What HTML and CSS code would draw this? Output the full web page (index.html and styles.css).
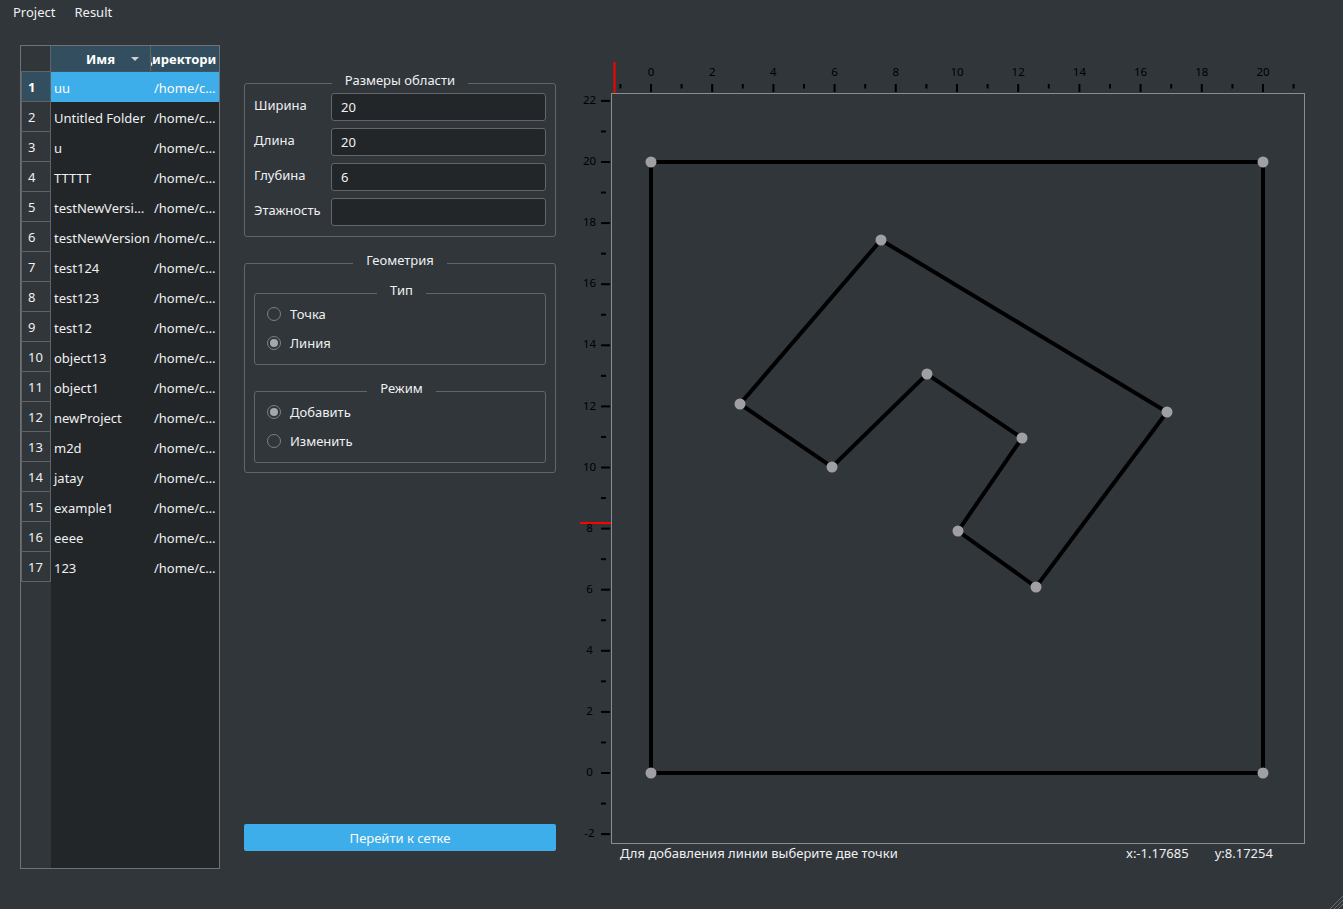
FILE: index.html
```html
<!DOCTYPE html>
<html lang="ru">
<head>
<meta charset="utf-8">
<title>Project</title>
<link rel="stylesheet" href="styles.css">
</head>
<body>
<div class="menubar">
  <span class="menu-item">Project</span>
  <span class="menu-item">Result</span>
</div>
<div class="main">
  <div class="table">
    <div class="vheader">
      <div class="corner"></div>
      <div class="vcell sel">1</div>
      <div class="vcell">2</div>
      <div class="vcell">3</div>
      <div class="vcell">4</div>
      <div class="vcell">5</div>
      <div class="vcell">6</div>
      <div class="vcell">7</div>
      <div class="vcell">8</div>
      <div class="vcell">9</div>
      <div class="vcell">10</div>
      <div class="vcell">11</div>
      <div class="vcell">12</div>
      <div class="vcell">13</div>
      <div class="vcell">14</div>
      <div class="vcell">15</div>
      <div class="vcell">16</div>
      <div class="vcell">17</div>
    </div>
    <div class="tbody">
      <div class="hrow">
        <div class="hcell c1"><span>Имя</span><span class="sort"></span></div>
        <div class="hcell c2"><span class="clip">Директория</span></div>
      </div>
      <div class="row sel"><div class="cell c1">uu</div><div class="cell c2">/home/c…</div></div>
      <div class="row"><div class="cell c1">Untitled Folder</div><div class="cell c2">/home/c…</div></div>
      <div class="row"><div class="cell c1">u</div><div class="cell c2">/home/c…</div></div>
      <div class="row"><div class="cell c1">TTTTT</div><div class="cell c2">/home/c…</div></div>
      <div class="row"><div class="cell c1">testNewVersi…</div><div class="cell c2">/home/c…</div></div>
      <div class="row"><div class="cell c1">testNewVersion</div><div class="cell c2">/home/c…</div></div>
      <div class="row"><div class="cell c1">test124</div><div class="cell c2">/home/c…</div></div>
      <div class="row"><div class="cell c1">test123</div><div class="cell c2">/home/c…</div></div>
      <div class="row"><div class="cell c1">test12</div><div class="cell c2">/home/c…</div></div>
      <div class="row"><div class="cell c1">object13</div><div class="cell c2">/home/c…</div></div>
      <div class="row"><div class="cell c1">object1</div><div class="cell c2">/home/c…</div></div>
      <div class="row"><div class="cell c1">newProject</div><div class="cell c2">/home/c…</div></div>
      <div class="row"><div class="cell c1">m2d</div><div class="cell c2">/home/c…</div></div>
      <div class="row"><div class="cell c1">jatay</div><div class="cell c2">/home/c…</div></div>
      <div class="row"><div class="cell c1">example1</div><div class="cell c2">/home/c…</div></div>
      <div class="row"><div class="cell c1">eeee</div><div class="cell c2">/home/c…</div></div>
      <div class="row"><div class="cell c1">123</div><div class="cell c2">/home/c…</div></div>
    </div>
  </div>

  <div class="panel">
    <fieldset class="group">
      <legend>Размеры области</legend>
      <div class="form">
        <label class="flabel">Ширина</label><div class="input">20</div>
        <label class="flabel">Длина</label><div class="input">20</div>
        <label class="flabel">Глубина</label><div class="input">6</div>
        <label class="flabel">Этажность</label><div class="input"></div>
      </div>
    </fieldset>

    <fieldset class="group geo">
      <legend>Геометрия</legend>
      <fieldset class="group inner">
        <legend>Тип</legend>
        <div class="radio"><span class="rb"></span><span>Точка</span></div>
        <div class="radio"><span class="rb on"></span><span>Линия</span></div>
      </fieldset>
      <fieldset class="group inner mode">
        <legend>Режим</legend>
        <div class="radio"><span class="rb on"></span><span>Добавить</span></div>
        <div class="radio"><span class="rb"></span><span>Изменить</span></div>
      </fieldset>
    </fieldset>

    <div class="button">Перейти к сетке</div>
  </div>

  <div class="view">
    <svg class="plot" width="740" height="790" viewBox="0 0 740 790" xmlns="http://www.w3.org/2000/svg">
      <g class="ticks" stroke="#000" stroke-width="2">
        <line x1="45.4" y1="29" x2="45.4" y2="33.5"/>
        <line x1="76" y1="29" x2="76" y2="37"/>
        <line x1="106.6" y1="29" x2="106.6" y2="33.5"/>
        <line x1="137.2" y1="29" x2="137.2" y2="37"/>
        <line x1="167.8" y1="29" x2="167.8" y2="33.5"/>
        <line x1="198.4" y1="29" x2="198.4" y2="37"/>
        <line x1="229" y1="29" x2="229" y2="33.5"/>
        <line x1="259.6" y1="29" x2="259.6" y2="37"/>
        <line x1="290.2" y1="29" x2="290.2" y2="33.5"/>
        <line x1="320.8" y1="29" x2="320.8" y2="37"/>
        <line x1="351.4" y1="29" x2="351.4" y2="33.5"/>
        <line x1="382" y1="29" x2="382" y2="37"/>
        <line x1="412.6" y1="29" x2="412.6" y2="33.5"/>
        <line x1="443.2" y1="29" x2="443.2" y2="37"/>
        <line x1="473.8" y1="29" x2="473.8" y2="33.5"/>
        <line x1="504.4" y1="29" x2="504.4" y2="37"/>
        <line x1="535" y1="29" x2="535" y2="33.5"/>
        <line x1="565.6" y1="29" x2="565.6" y2="37"/>
        <line x1="596.2" y1="29" x2="596.2" y2="33.5"/>
        <line x1="626.8" y1="29" x2="626.8" y2="37"/>
        <line x1="657.4" y1="29" x2="657.4" y2="33.5"/>
        <line x1="688" y1="29" x2="688" y2="37"/>
        <line x1="718.6" y1="29" x2="718.6" y2="33.5"/>

        <line x1="26" y1="779.1" x2="35" y2="779.1"/>
        <line x1="26" y1="748.55" x2="31" y2="748.55"/>
        <line x1="26" y1="718" x2="35" y2="718"/>
        <line x1="26" y1="687.45" x2="31" y2="687.45"/>
        <line x1="26" y1="656.9" x2="35" y2="656.9"/>
        <line x1="26" y1="626.35" x2="31" y2="626.35"/>
        <line x1="26" y1="595.8" x2="35" y2="595.8"/>
        <line x1="26" y1="565.25" x2="31" y2="565.25"/>
        <line x1="26" y1="534.7" x2="35" y2="534.7"/>
        <line x1="26" y1="504.15" x2="31" y2="504.15"/>
        <line x1="26" y1="473.6" x2="35" y2="473.6"/>
        <line x1="26" y1="443.05" x2="31" y2="443.05"/>
        <line x1="26" y1="412.5" x2="35" y2="412.5"/>
        <line x1="26" y1="381.95" x2="31" y2="381.95"/>
        <line x1="26" y1="351.4" x2="35" y2="351.4"/>
        <line x1="26" y1="320.85" x2="31" y2="320.85"/>
        <line x1="26" y1="290.3" x2="35" y2="290.3"/>
        <line x1="26" y1="259.75" x2="31" y2="259.75"/>
        <line x1="26" y1="229.2" x2="35" y2="229.2"/>
        <line x1="26" y1="198.65" x2="31" y2="198.65"/>
        <line x1="26" y1="168.1" x2="35" y2="168.1"/>
        <line x1="26" y1="137.55" x2="31" y2="137.55"/>
        <line x1="26" y1="107" x2="35" y2="107"/>
        <line x1="26" y1="76.45" x2="31" y2="76.45"/>
        <line x1="26" y1="45.9" x2="35" y2="45.9"/>
      </g>
      <g class="axis-label" text-anchor="middle">
        <text x="76" y="21">0</text>
        <text x="137.2" y="21">2</text>
        <text x="198.4" y="21">4</text>
        <text x="259.6" y="21">6</text>
        <text x="320.8" y="21">8</text>
        <text x="382" y="21">10</text>
        <text x="443.2" y="21">12</text>
        <text x="504.4" y="21">14</text>
        <text x="565.6" y="21">16</text>
        <text x="626.8" y="21">18</text>
        <text x="688" y="21">20</text>

        <text x="14.5" y="782">-2</text>
        <text x="14.5" y="721">0</text>
        <text x="14.5" y="660">2</text>
        <text x="14.5" y="599">4</text>
        <text x="14.5" y="538">6</text>
        <text x="14.5" y="477">8</text>
        <text x="14.5" y="416">10</text>
        <text x="14.5" y="355">12</text>
        <text x="14.5" y="293">14</text>
        <text x="14.5" y="232">16</text>
        <text x="14.5" y="171">18</text>
        <text x="14.5" y="110">20</text>
        <text x="14.5" y="49">22</text>
      </g>
      <rect x="36.5" y="38.5" width="693" height="750" fill="none" stroke="#8a8d90" stroke-width="1"/>
      <line x1="39.5" y1="7" x2="39.5" y2="38" stroke="#ff0000" stroke-width="2"/>
      <line x1="5" y1="468" x2="36" y2="468" stroke="#ff0000" stroke-width="2"/>
      <g fill="none" stroke="#000" stroke-width="4">
        <polygon points="76,107 688,107 688,718 76,718"/>
        <polygon points="165,349 306,185 592,357 461,532 383,476 447,383 352,319 257,412"/>
      </g>
      <g fill="#a0a0a4">
        <circle cx="76" cy="107" r="5.5"/>
        <circle cx="688" cy="107" r="5.5"/>
        <circle cx="688" cy="718" r="5.5"/>
        <circle cx="76" cy="718" r="5.5"/>
        <circle cx="165" cy="349" r="5.5"/>
        <circle cx="306" cy="185" r="5.5"/>
        <circle cx="592" cy="357" r="5.5"/>
        <circle cx="461" cy="532" r="5.5"/>
        <circle cx="383" cy="476" r="5.5"/>
        <circle cx="447" cy="383" r="5.5"/>
        <circle cx="352" cy="319" r="5.5"/>
        <circle cx="257" cy="412" r="5.5"/>
      </g>
    </svg>
    <div class="status">
      <span class="msg">Для добавления линии выберите две точки</span>
      <span class="coord-x">x:-1.17685</span>
      <span class="coord-y">y:8.17254</span>
    </div>
  </div>
</div>
<div class="grip">
  <svg width="14" height="14" viewBox="0 0 14 14" xmlns="http://www.w3.org/2000/svg">
    <g stroke="#6a6e72" stroke-width="1">
      <line x1="14" y1="1" x2="1" y2="14"/>
      <line x1="14" y1="5" x2="5" y2="14"/>
      <line x1="14" y1="9" x2="9" y2="14"/>
    </g>
  </svg>
</div>
</body>
</html>
```

FILE: styles.css
```css
* {
  box-sizing: border-box;
}

html, body {
  margin: 0;
  padding: 0;
}

body {
  background: #31363b;
  color: #eff0f1;
  font-family: "Noto Sans", "Open Sans", sans-serif;
  font-size: 13px;
  width: 1343px;
  height: 909px;
  overflow: hidden;
  position: relative;
}

/* menu bar */
.menubar {
  height: 24px;
  display: flex;
  align-items: center;
  padding-left: 3px;
}

.menu-item {
  padding: 0 9px 0 10px;
  line-height: 24px;
}

.main {
  display: flex;
  align-items: flex-start;
  padding: 21px 0 0 20px;
}

/* table */
.table {
  width: 200px;
  height: 824px;
  border: 1px solid #6e7175;
  display: flex;
  flex-shrink: 0;
}

.vheader {
  width: 30px;
  flex-shrink: 0;
  background: #31363b;
  display: flex;
  flex-direction: column;
}

.corner {
  height: 26px;
  border-right: 1px solid #5f6367;
  border-bottom: 1px solid #5f6367;
}

.vcell {
  height: 30px;
  border: 1px solid #5f6367;
  border-top: none;
  padding-left: 6px;
  padding-top: 1px;
  display: flex;
  align-items: center;
  color: #eff0f1;
}

.vcell.sel {
  background: #334e5e;
  font-weight: bold;
  color: #ffffff;
}

.tbody {
  flex: 1;
  background: #232629;
  display: flex;
  flex-direction: column;
  min-width: 0;
}

.hrow {
  height: 26px;
  display: flex;
  background: #334e5e;
  border-bottom: 1px solid #3b5566;
}

.hcell {
  position: relative;
  display: flex;
  align-items: center;
  font-weight: bold;
  color: #ffffff;
  white-space: nowrap;
  overflow: hidden;
}

.hcell.c1 {
  width: 100px;
  flex-shrink: 0;
  justify-content: center;
  border-right: 1px solid #5f6367;
}

.hcell.c2 {
  flex: 1;
  margin-right: 3px;
}

.clip {
  margin-left: -9px;
}

.sort {
  position: absolute;
  right: 11px;
  top: 11px;
  width: 0;
  height: 0;
  border-left: 4px solid transparent;
  border-right: 4px solid transparent;
  border-top: 4px solid #cfd1d3;
}

.row {
  height: 30px;
  display: flex;
  align-items: center;
  white-space: nowrap;
  padding-top: 1px;
}

.row.sel {
  background: #3daee9;
  color: #fcfcfc;
}

.cell {
  padding-left: 3px;
  overflow: hidden;
}

.cell.c1 {
  width: 100px;
  flex-shrink: 0;
}

.cell.c2 {
  flex: 1;
}

/* middle panel */
.panel {
  width: 312px;
  height: 806px;
  margin-left: 24px;
  padding-top: 27px;
  display: flex;
  flex-direction: column;
  flex-shrink: 0;
}

.group {
  margin: 0;
  min-width: 0;
  border: 1px solid #62666a;
  border-radius: 3px;
  padding: 0 9px 9px 9px;
}

.group legend {
  margin: 0 auto;
  padding: 0 13px 6px 13px;
  line-height: 16px;
  color: #eff0f1;
}

.form {
  display: grid;
  grid-template-columns: 77px 1fr;
  grid-auto-rows: 28px;
  row-gap: 7px;
  align-items: center;
  margin-top: -1px;
  margin-bottom: 1px;
}

.flabel {
  line-height: 16px;
  margin-top: -5px;
}

.input {
  height: 28px;
  background: #232629;
  border: 1px solid #62666a;
  border-radius: 3px;
  padding-left: 9px;
  display: flex;
  align-items: center;
}

.geo {
  margin-top: 15px;
  padding-top: 8px;
}

.inner {
  padding: 0 9px 11px 12px;
  display: flex;
  flex-direction: column;
  gap: 9px;
}

.inner.mode {
  margin-top: 15px;
}

.radio {
  height: 20px;
  display: flex;
  align-items: center;
  gap: 9px;
}

.rb {
  width: 14px;
  height: 14px;
  border-radius: 50%;
  border: 1px solid #7d8185;
  display: flex;
  align-items: center;
  justify-content: center;
  flex-shrink: 0;
}

.rb.on::after {
  content: "";
  width: 8px;
  height: 8px;
  border-radius: 50%;
  background: #a5a8ab;
}

.button {
  margin-top: auto;
  height: 27px;
  background: #3daee9;
  border-radius: 2px;
  color: #fcfcfc;
  display: flex;
  align-items: center;
  justify-content: center;
}

/* plot view */
.view {
  margin-left: 19px;
  margin-top: 10px;
  display: flex;
  flex-direction: column;
}

.plot {
  display: block;
}

.axis-label text {
  font-family: "Noto Sans", sans-serif;
  font-size: 11.5px;
  fill: #000000;
}

.status {
  height: 16px;
  display: flex;
  align-items: center;
  white-space: nowrap;
  line-height: 16px;
}

.msg {
  margin-left: 45px;
  width: 506px;
}

.coord-y {
  margin-left: 26px;
}

.grip {
  position: absolute;
  right: 0;
  bottom: 0;
  width: 14px;
  height: 14px;
}

.grip svg {
  display: block;
}
```
